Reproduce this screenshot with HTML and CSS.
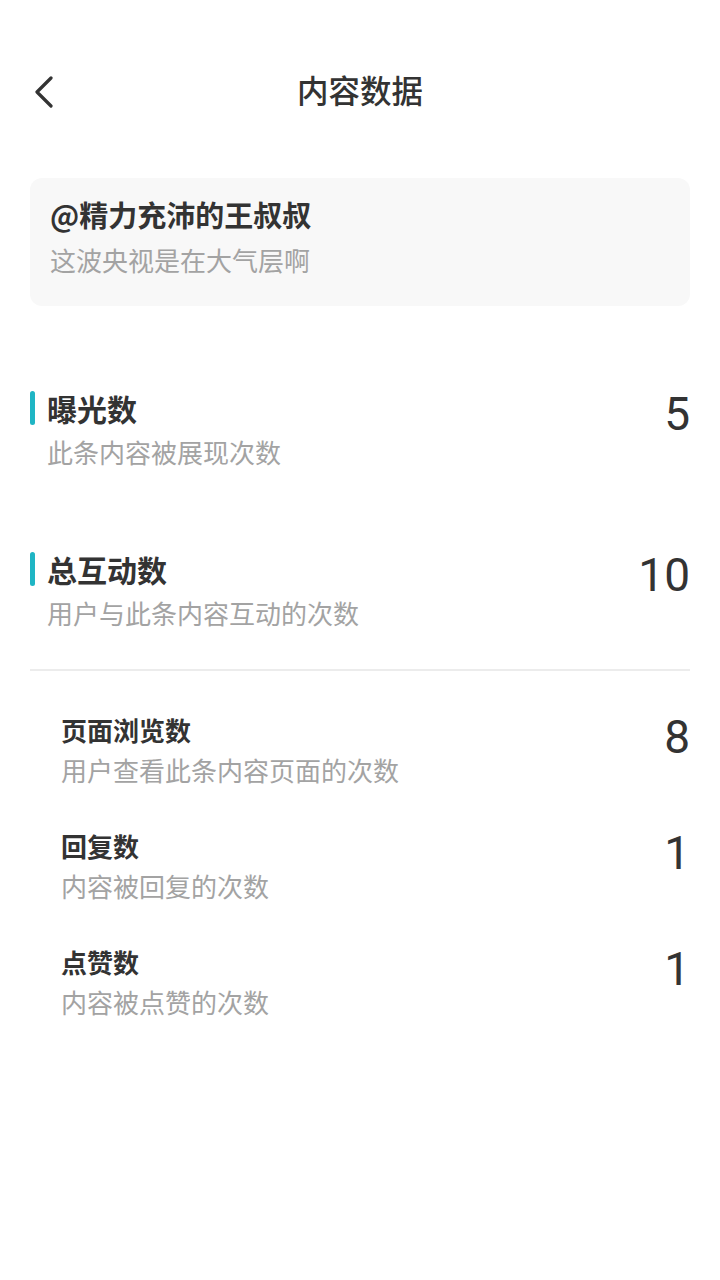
FILE: index.html
```html
<!DOCTYPE html>
<html lang="zh-CN">
<head>
<meta charset="utf-8">
<title>内容数据</title>
<link rel="stylesheet" href="styles.css">
</head>
<body>
<div class="page">
  <header class="nav">
    <svg class="back" width="20" height="32" viewBox="0 0 20 32"><path d="M17 2 L3 16 L17 30" fill="none" stroke="#333" stroke-width="3.2" stroke-linecap="round" stroke-linejoin="round"/></svg>
    <h1 class="nav-title">内容数据</h1>
  </header>

  <section class="card">
    <div class="card-title">@精力充沛的王叔叔</div>
    <div class="card-sub">这波央视是在大气层啊</div>
  </section>

  <section class="main-list">
    <div class="main-row">
      <div class="main-text">
        <div class="main-label">曝光数</div>
        <div class="main-desc">此条内容被展现次数</div>
      </div>
      <div class="value">5</div>
    </div>
    <div class="main-row">
      <div class="main-text">
        <div class="main-label">总互动数</div>
        <div class="main-desc">用户与此条内容互动的次数</div>
      </div>
      <div class="value">10</div>
    </div>
  </section>

  <div class="divider"></div>

  <section class="sub-list">
    <div class="sub-row">
      <div class="sub-text">
        <div class="sub-label">页面浏览数</div>
        <div class="sub-desc">用户查看此条内容页面的次数</div>
      </div>
      <div class="value">8</div>
    </div>
    <div class="sub-row">
      <div class="sub-text">
        <div class="sub-label">回复数</div>
        <div class="sub-desc">内容被回复的次数</div>
      </div>
      <div class="value">1</div>
    </div>
    <div class="sub-row">
      <div class="sub-text">
        <div class="sub-label">点赞数</div>
        <div class="sub-desc">内容被点赞的次数</div>
      </div>
      <div class="value">1</div>
    </div>
  </section>
</div>
</body>
</html>
```

FILE: styles.css
```css
* { box-sizing: border-box; }
html, body { margin: 0; padding: 0; background: #ffffff; }
body {
  font-family: "Noto Sans CJK SC", "Noto Sans", sans-serif;
  color: #333333;
  width: 720px;
}
.page { padding: 0 30px; }

.nav {
  position: relative;
  height: 72px;
  margin-top: 56px;
  display: flex;
  align-items: center;
  justify-content: center;
}
.back {
  position: absolute;
  left: 4px;
  top: 20px;
}
.nav-title {
  margin: 0 0 6px;
  font-size: 31.5px;
  font-weight: 500;
  line-height: 40px;
  color: #333;
}

.card {
  margin-top: 50px;
  background: #f8f8f8;
  border-radius: 12px;
  height: 128px;
  padding: 16px 20px 0;
}
.card-title {
  font-size: 29px;
  font-weight: 700;
  line-height: 40px;
  color: #333;
}
.card-sub {
  margin-top: 8px;
  font-size: 26px;
  line-height: 36px;
  color: #a3a3a3;
}

.main-list {
  margin-top: 82px;
  display: flex;
  flex-direction: column;
  gap: 79px;
}
.main-row {
  display: flex;
  justify-content: space-between;
  align-items: flex-start;
}
.main-label {
  position: relative;
  padding-left: 17px;
  font-size: 30px;
  font-weight: 700;
  line-height: 40px;
  color: #333;
}
.main-label::before {
  content: "";
  position: absolute;
  left: 0;
  top: 3px;
  width: 5px;
  height: 34px;
  border-radius: 3px;
  background: #1fb5c4;
}
.main-desc {
  padding-left: 17px;
  margin-top: 6px;
  font-size: 26px;
  line-height: 36px;
  color: #a3a3a3;
}
.value {
  font-family: Roboto, "Noto Sans", sans-serif;
  font-size: 46px;
  line-height: 52px;
  color: #333;
}

.divider {
  margin-top: 38px;
  height: 2px;
  background: #ececec;
}

.sub-list {
  margin-top: 40px;
  padding-left: 31px;
  display: flex;
  flex-direction: column;
  gap: 40px;
}
.sub-row {
  display: flex;
  justify-content: space-between;
  align-items: flex-start;
}
.sub-label {
  font-size: 26px;
  font-weight: 700;
  line-height: 38px;
  color: #333;
}
.sub-desc {
  margin-top: 4px;
  font-size: 26px;
  line-height: 34px;
  color: #a3a3a3;
}
```
